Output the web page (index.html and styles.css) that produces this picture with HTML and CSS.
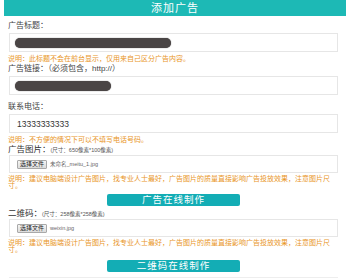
FILE: index.html
```html
<!DOCTYPE html>
<html lang="zh-CN">
<head>
	<meta charset="UTF-8">
	<title>添加广告</title>
	<link rel="stylesheet" href="styles.css">
</head>
<body>
	<div class="page">
		<div class="head">添加广告</div>
		<form class="form">
			<div class="row row-first">
				<div class="label">广告标题：</div>
				<div class="box"><span class="mask mask-long"></span></div>
				<div class="note">说明：此标题不会在前台显示，仅用来自己区分广告内容。</div>
			</div>
			<div class="row row-link">
				<div class="label">广告链接：（必须包含，http://）</div>
				<div class="box"><span class="mask mask-short"></span></div>
			</div>
			<div class="row row-tel">
				<div class="label">联系电话：</div>
				<div class="box"><span class="value">13333333333</span></div>
				<div class="note">说明：不方便的情况下可以不填写电话号码。</div>
			</div>
			<div class="row row-pic">
				<div class="label label-big">广告图片：<small>(尺寸：650像素*100像素)</small></div>
				<div class="box box-file"><span class="file-btn">选择文件</span><span class="file-name">未命名_meitu_1.jpg</span></div>
				<div class="note note-wrap">说明：建议电脑端设计广告图片，找专业人士最好，广告图片的质量直接影响广告投放效果，注意图片尺寸。</div>
				<div class="make"><span class="make-btn">广告在线制作</span></div>
			</div>
			<div class="row row-qr">
				<div class="label label-big">二维码：<small>(尺寸：258像素*258像素)</small></div>
				<div class="box box-file"><span class="file-btn">选择文件</span><span class="file-name">weixin.jpg</span></div>
				<div class="note note-wrap">说明：建议电脑端设计广告图片，找专业人士最好，广告图片的质量直接影响广告投放效果，注意图片尺寸。</div>
				<div class="make make-last"><span class="make-btn">二维码在线制作</span></div>
			</div>
			<div class="next"></div>
		</form>
	</div>
</body>
</html>
```

FILE: styles.css
```css
html,body{
	padding: 0;
	margin: 0;
	background: #fff;
}
body {
	font-family: "Liberation Sans", "Noto Sans CJK SC", sans-serif;
	color: #333;
	overflow: hidden;
}
.page {
	padding: 0 4px;
}
.head {
	height: 16px;
	line-height: 16px;
	background: #1db9b5;
	color: #fff;
	text-align: center;
	font-size: 11px;
	letter-spacing: 1px;
}
.form {
	padding: 0 8px 0 4px;
}
.row-first {
	margin-top: 5px;
}
.row-link {
	margin-top: 1px;
}
.row-tel {
	margin-top: 7px;
}
.row-pic {
	margin-top: 0;
}
.row-qr {
	margin-top: 2px;
}
.label {
	height: 10px;
	line-height: 10px;
	font-size: 8px;
	color: #444;
	white-space: nowrap;
}
.label-big {
	font-size: 8.5px;
	color: #333;
}
.label small {
	font-size: 5.5px;
	color: #555;
}
.box {
	margin: 2px 0 0 1px;
	height: 17px;
	border: 1px solid #e6e6e6;
	display: flex;
	align-items: center;
	padding-left: 5px;
}
.box-file {
	height: 16px;
	margin-top: 1px;
	padding-left: 7px;
}
.mask {
	display: inline-block;
	height: 10px;
	background: #4a4545;
	border-radius: 5px;
	box-shadow: 0 0 1px #4a4545;
}
.mask-long {
	width: 156px;
}
.mask-short {
	width: 96px;
}
.value {
	font-size: 8.5px;
	color: #333;
	padding-left: 2px;
}
.file-btn {
	display: inline-block;
	height: 7px;
	line-height: 7px;
	padding: 0 2px;
	font-size: 6px;
	color: #222;
	background: linear-gradient(#f4f4f4, #dcdcdc);
	border: 1px solid #a9a9a9;
	border-radius: 1px;
}
.file-name {
	margin-left: 3px;
	font-size: 5.5px;
	color: #666;
}
.note {
	margin-top: 3px;
	width: 326px;
	line-height: 8px;
	font-size: 7px;
	color: #e9961f;
}
.note-wrap {
	line-height: 7px;
	margin-top: 2px;
}
.make {
	margin-top: 5px;
	display: flex;
	justify-content: center;
	padding-left: 1px;
}
.make-last {
	margin-top: 7px;
}
.make-btn {
	display: block;
	width: 133px;
	height: 12px;
	line-height: 12px;
	background: #13adb5;
	border-radius: 2px;
	color: #fff;
	text-align: center;
	font-size: 9.5px;
	letter-spacing: 1px;
}
.next {
	margin: 5px 0 0 1px;
	border-top: 1px solid #eee;
}
```
